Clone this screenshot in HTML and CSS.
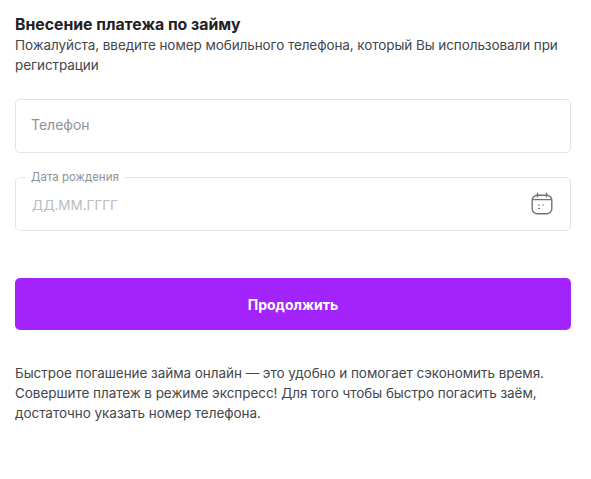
FILE: index.html
```html
<!DOCTYPE html>
<html lang="ru">
<head>
<meta charset="utf-8">
<title>Внесение платежа по займу</title>
<link rel="stylesheet" href="styles.css">
</head>
<body>
<main class="page">
  <h1 class="title">Внесение платежа по займу</h1>
  <p class="lead">Пожалуйста, введите номер мобильного телефона, который Вы использовали при регистрации</p>
  <form class="form">
    <div class="field"><span class="placeholder">Телефон</span></div>
    <fieldset class="field field-date">
      <legend class="legend">Дата рождения</legend>
      <span class="placeholder placeholder-date">ДД.ММ.ГГГГ</span>
      <svg class="icon" width="22" height="23" viewBox="0 0 22 23" fill="none" stroke="#6f747b" stroke-width="1.4" stroke-linecap="round" aria-hidden="true">
        <rect x="1.2" y="3.2" width="19.6" height="18.6" rx="5"/>
        <path d="M6.5 1.2v3.6M15.5 1.2v3.6M1.6 7.6h18.8"/>
        <path d="M7.6 13h.8M11.6 13h.8M7.6 16.4h.8" stroke-width="1.2"/>
      </svg>
    </fieldset>
    <button class="submit" type="button">Продолжить</button>
  </form>
  <p class="note">Быстрое погашение займа онлайн — это удобно и помогает сэкономить время. Совершите платеж в режиме экспресс! Для того чтобы быстро погасить заём, достаточно указать номер телефона.</p>
</main>
</body>
</html>
```
FILE: styles.css
```css
* { box-sizing: border-box; }
html, body { margin: 0; background: #fff; }
body { font-family: Inter, "Noto Sans", sans-serif; color: #43464b; }
.page { width: 556px; margin-left: 15px; padding-top: 15px; }
.title { margin: 0; font-size: 15.8px; line-height: 20px; font-weight: 700; color: #1f2126; }
.lead { margin: 0; font-size: 13.5px; line-height: 20px; letter-spacing: -0.08px; }
.form { margin-top: 24px; display: flex; flex-direction: column; }
.field { height: 54px; margin: 0; padding: 0 15px; border: 1px solid #e3e4e7; border-radius: 5px; display: flex; align-items: center; }
.placeholder { font-size: 14px; color: #8f9399; margin-top: -3px; }
.field-date { margin-top: 18px; height: 60px; padding: 14px 17px 0 16px; min-width: 0; justify-content: space-between; }
.legend { padding: 0 5px; margin-left: -6px; font-size: 11.5px; line-height: 12px; color: #8f9399; }
.placeholder-date { color: #b9bcc1; font-size: 13.5px; }
.icon { margin-top: -5px; }
.submit { margin-top: 47px; height: 52px; width: 100%; border: 0; border-radius: 5px; background: #a324fb; color: #fff; font: 700 14px Inter, "Noto Sans", sans-serif; }
.note { margin: 33px 0 0; font-size: 13.5px; line-height: 20px; letter-spacing: -0.05px; }
```
